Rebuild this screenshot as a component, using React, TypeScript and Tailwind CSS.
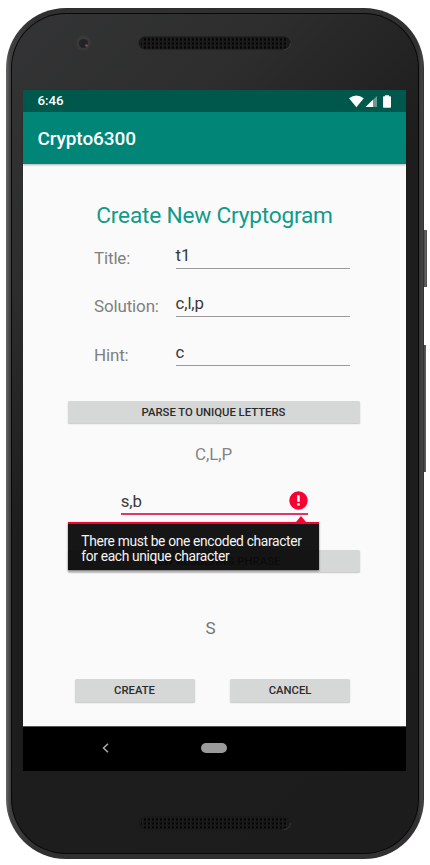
import type { ReactNode } from "react";

function Speaker() {
  return (
    <svg width="154" height="14" viewBox="0 0 154 14" className="block">
      <defs>
        <pattern id="mesh" width="4" height="4" patternUnits="userSpaceOnUse" x="1" y="1.500">
          <circle cx="2" cy="2" r="1.150" fill="#030303" />
          <circle cx="3.600" cy="0.800" r="0.500" fill="#2a2a2a" />
        </pattern>
      </defs>
      <rect x="0.500" y="0.500" width="152" height="13" rx="6.500" fill="#191919" />
      <path d="M146 13.500a6.500 6.500 0 0 0 6.500-6.500" fill="none" stroke="#484848" strokeWidth="0.700" />
      <rect x="3" y="1.500" width="147" height="12" rx="5" fill="url(#mesh)" />
    </svg>
  );
}

function Field({ label, value, className }: { label: string; value: string; className: string }) {
  return (
    <div className={`flex h-[27px] w-[256px] items-start ${className}`}>
      <span className="w-[81.500px] pt-[4px] text-[17px] leading-[24px] tracking-[-0.15px] text-[#808080]">{label}</span>
      <span className="h-[27px] flex-1 border-b border-[#9b9b9b] text-[16.800px] leading-[26px] tracking-[-0.1px] text-[#383838]">{value}</span>
    </div>
  );
}

function Button({ children, className }: { children: ReactNode; className: string }) {
  return (
    <button
      className={`block h-[22.500px] rounded-[1.500px] bg-[#d6d7d7] pt-px text-center text-[11.300px] leading-[21.500px] font-medium text-[#2c2c2c] shadow-[0_1px_1.500px_rgba(0,0,0,0.22)] ${className}`}
    >
      {children}
    </button>
  );
}

function StatusBar() {
  return (
    <div className="flex h-[22px] items-center justify-between bg-[#00574b] pr-[15px] pl-[14.500px] text-white">
      <span className="text-[13.300px] leading-[22px] font-medium">6:46</span>
      <svg width="42" height="13" viewBox="0 0 42 13" fill="#fff">
        <path d="M0 3.200Q7.300-2.200 14.800 3.200L7.400 12.200Z" />
        <path d="M28 1v11H16.500Z" opacity=".4" />
        <path d="M24 4.800V12h-7.500Z" />
        <path d="M36 1.300V.3h4v1h1.200q.8 0 .8.800V12q0 .8-.8.800h-6.400q-.8 0-.8-.8V2.100q0-.8.800-.8Z" />
      </svg>
    </div>
  );
}

function ErrorPopup() {
  return (
    <div className="absolute top-[27px] -left-[53px] z-10 w-[251px]">
      <svg width="12" height="6" viewBox="0 0 12 6" className="ml-[227px] block">
        <path d="M6 0L11 6H1Z" fill="#f80031" />
      </svg>
      <div className="h-[48px] border-t-2 border-[#f80031] bg-[#0a0a0a]/95 pt-[9.500px] pl-[13.500px] text-[13.800px] leading-[15.300px] tracking-[-0.34px] whitespace-nowrap text-[#f4f4f4] shadow-[0_1px_2px_rgba(0,0,0,0.5)]">
        There must be one encoded character
        <br />
        for each unique character
      </div>
    </div>
  );
}

export default function App() {
  return (
    <div className="relative h-[865px] w-[430px] overflow-hidden bg-white pt-[8px] pl-[6px] font-['Roboto',sans-serif]">
      <div className="absolute top-[230px] left-[423px] h-[57px] w-[4px] bg-[linear-gradient(90deg,#333,#696969_70%,#444)]" />
      <div className="absolute top-[345px] left-[423px] h-[127px] w-[3px] bg-[linear-gradient(90deg,#333,#656565)]" />
      <div className="relative h-[851px] w-[418px] rounded-[60px] bg-[linear-gradient(90deg,#676767_0px,#414141_4px,#303030_30px,#323032_412px,#454445_416px,#303030)] p-[5px]">
        <div className="h-[841px] rounded-[55px] bg-[#080808] p-px">
          <div className="flex h-[839px] flex-col rounded-[54px] bg-[linear-gradient(135deg,#333435_0%,#2d2d2d_22%,#1d1d1d_42%,#1c1c1c_100%)] pl-[11px]">
            <div className="flex h-[76px] items-start pt-[22px] pl-[53px]">
              <svg width="16" height="16" viewBox="0 0 16 16" className="mt-[-1px]">
                <circle cx="7.500" cy="8" r="7.500" fill="#39393a" />
                <circle cx="7.500" cy="8.500" r="4.500" fill="#222229" />
                <circle cx="10.500" cy="10.500" r="1.300" fill="#74536c" />
              </svg>
              <div className="ml-[46px]">
                <Speaker />
              </div>
            </div>
            <div className="flex h-[681px] w-[383px] flex-col bg-[#fafafa]">
              <StatusBar />
              <div className="z-10 h-[52px] bg-[#008577] pl-[14.500px] text-[19px] leading-[54px] font-medium tracking-[-0.1px] text-white shadow-[0_1px_2px_rgba(0,0,0,0.3)]">
                Crypto6300
              </div>
              <div className="flex h-[562px] flex-col items-center pt-[36px]">
                <h1 className="text-[22.700px] leading-[32px] tracking-[-0.22px] text-[#109a8a]">Create New Cryptogram</h1>
                <Field label="Title:" value="t1" className="mt-[10px] ml-[15px]" />
                <Field label="Solution:" value="c,l,p" className="mt-[21px] ml-[15px]" />
                <Field label="Hint:" value="c" className="mt-[22px] ml-[15px]" />
                <Button className="mt-[34.500px] mr-[2px] w-[292px]">PARSE TO UNIQUE LETTERS</Button>
                <div className="mt-[19px] mr-[2px] h-[24px] text-[17px] leading-[24px] tracking-[-0.1px] text-[#858585]">C,L,P</div>
                <div className="relative mt-[23px] h-[26px] w-[187.500px] border-b-2 border-[#e0366a] text-[16.800px] leading-[25px] tracking-[-0.1px] text-[#383838]">
                  s,b
                  <svg width="19" height="19" viewBox="0 0 19 19" className="absolute top-[2px] right-0">
                    <circle cx="9.500" cy="9.500" r="9.200" fill="#f80031" />
                    <path d="M8.200 4.300h2.500v6.400H8.200zM8.200 12.300h2.500v2.300H8.200z" fill="#fff" />
                  </svg>
                  <ErrorPopup />
                </div>
                <Button className="mt-[34.500px] mr-[2px] w-[292px]">VIEW RESULTING PHRASE</Button>
                <div className="mt-[44px] mr-[8px] h-[24px] text-[17px] leading-[24px] text-[#757575]">S</div>
                <div className="mt-[39px] mr-[4.500px] flex gap-[35.500px]">
                  <Button className="w-[120px]">CREATE</Button>
                  <Button className="w-[120px]">CANCEL</Button>
                </div>
              </div>
              <div className="flex h-[45px] items-center border-t border-[#555] bg-black pb-[2px] pl-[79px]">
                <svg width="7" height="10" viewBox="0 0 7 10" fill="none" stroke="#aaa" strokeWidth="1.500">
                  <path d="M6 .7L1.500 5L6 9.300" />
                </svg>
                <div className="ml-[92px] h-[10px] w-[26px] rounded-full bg-[#9a9a9a]" />
              </div>
            </div>
            <div className="mt-[45px] ml-[115px]">
              <Speaker />
            </div>
          </div>
        </div>
      </div>
    </div>
  );
}
